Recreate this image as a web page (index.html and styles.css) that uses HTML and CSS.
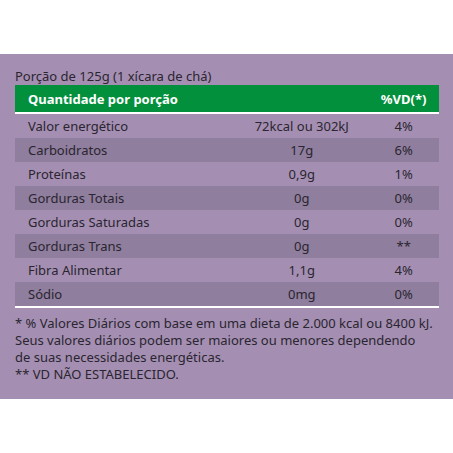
FILE: index.html
```html
<!DOCTYPE html>
<html lang="pt-BR">
<head>
    <meta charset="UTF-8">
    <meta name="viewport" content="width=device-width, initial-scale=1.0">
    <title>Informação Nutricional</title>
    <link rel="stylesheet" href="styles.css">
</head>
<body>

    <!-- Tabela nutricional -->
    <div class="panel">
        <p class="portion">Porção de 125g (1 xícara de chá)</p>

        <table class="nutri">
            <thead>
                <tr>
                    <th class="col-name">Quantidade por porção</th>
                    <th class="col-qty"></th>
                    <th class="col-vd">%VD(*)</th>
                </tr>
            </thead>
            <tbody>
                <tr><td class="col-name">Valor energético</td><td class="col-qty">72kcal ou 302kJ</td><td class="col-vd">4%</td></tr>
                <tr><td class="col-name">Carboidratos</td><td class="col-qty">17g</td><td class="col-vd">6%</td></tr>
                <tr><td class="col-name">Proteínas</td><td class="col-qty">0,9g</td><td class="col-vd">1%</td></tr>
                <tr><td class="col-name">Gorduras Totais</td><td class="col-qty">0g</td><td class="col-vd">0%</td></tr>
                <tr><td class="col-name">Gorduras Saturadas</td><td class="col-qty">0g</td><td class="col-vd">0%</td></tr>
                <tr><td class="col-name">Gorduras Trans</td><td class="col-qty">0g</td><td class="col-vd">**</td></tr>
                <tr><td class="col-name">Fibra Alimentar</td><td class="col-qty">1,1g</td><td class="col-vd">4%</td></tr>
                <tr><td class="col-name">Sódio</td><td class="col-qty">0mg</td><td class="col-vd">0%</td></tr>
            </tbody>
        </table>

        <div class="notes">
            <p>* % Valores Diários com base em uma dieta de 2.000 kcal ou 8400 kJ.<br>
            Seus valores diários podem ser maiores ou menores dependendo<br>
            de suas necessidades energéticas.</p>
            <p>** VD NÃO ESTABELECIDO.</p>
        </div>
    </div>

</body>
</html>
```

FILE: styles.css
```css
body {
    margin: 0;
    padding-top: 54px;
    font-family: "Noto Sans", Arial, sans-serif;
    color: #2a2530;
    background-color: #ffffff;
}
.panel {
    background-color: #a48fb2;
    padding: 14px 15px 16px 15px;
}
.portion {
    margin: 0 0 0 0;
    font-size: 13px;
    line-height: 17px;
}
/* Table */
.nutri {
    width: 424px;
    border-collapse: collapse;
    font-size: 13px;
}
.nutri th {
    background-color: #03903d;
    color: #ffffff;
    font-weight: 700;
    height: 27px;
    padding: 0;
    border-bottom: 2px solid #ffffff;
}
.nutri td {
    height: 24px;
    padding: 0;
}
.nutri tbody tr:nth-child(even) td {
    background-color: #8f7e9d;
}
.nutri tbody tr:last-child td {
    border-bottom: 2px solid #ffffff;
}
.col-name {
    width: 214px;
    text-align: left;
    padding-left: 13px !important;
}
.col-qty {
    width: 138px;
    text-align: center;
}
.col-vd {
    width: 72px;
    text-align: center;
}
/* Footnotes */
.notes {
    margin-top: 7px;
    font-size: 13px;
    line-height: 17px;
    white-space: nowrap;
}
.notes p {
    margin: 0;
}
```
